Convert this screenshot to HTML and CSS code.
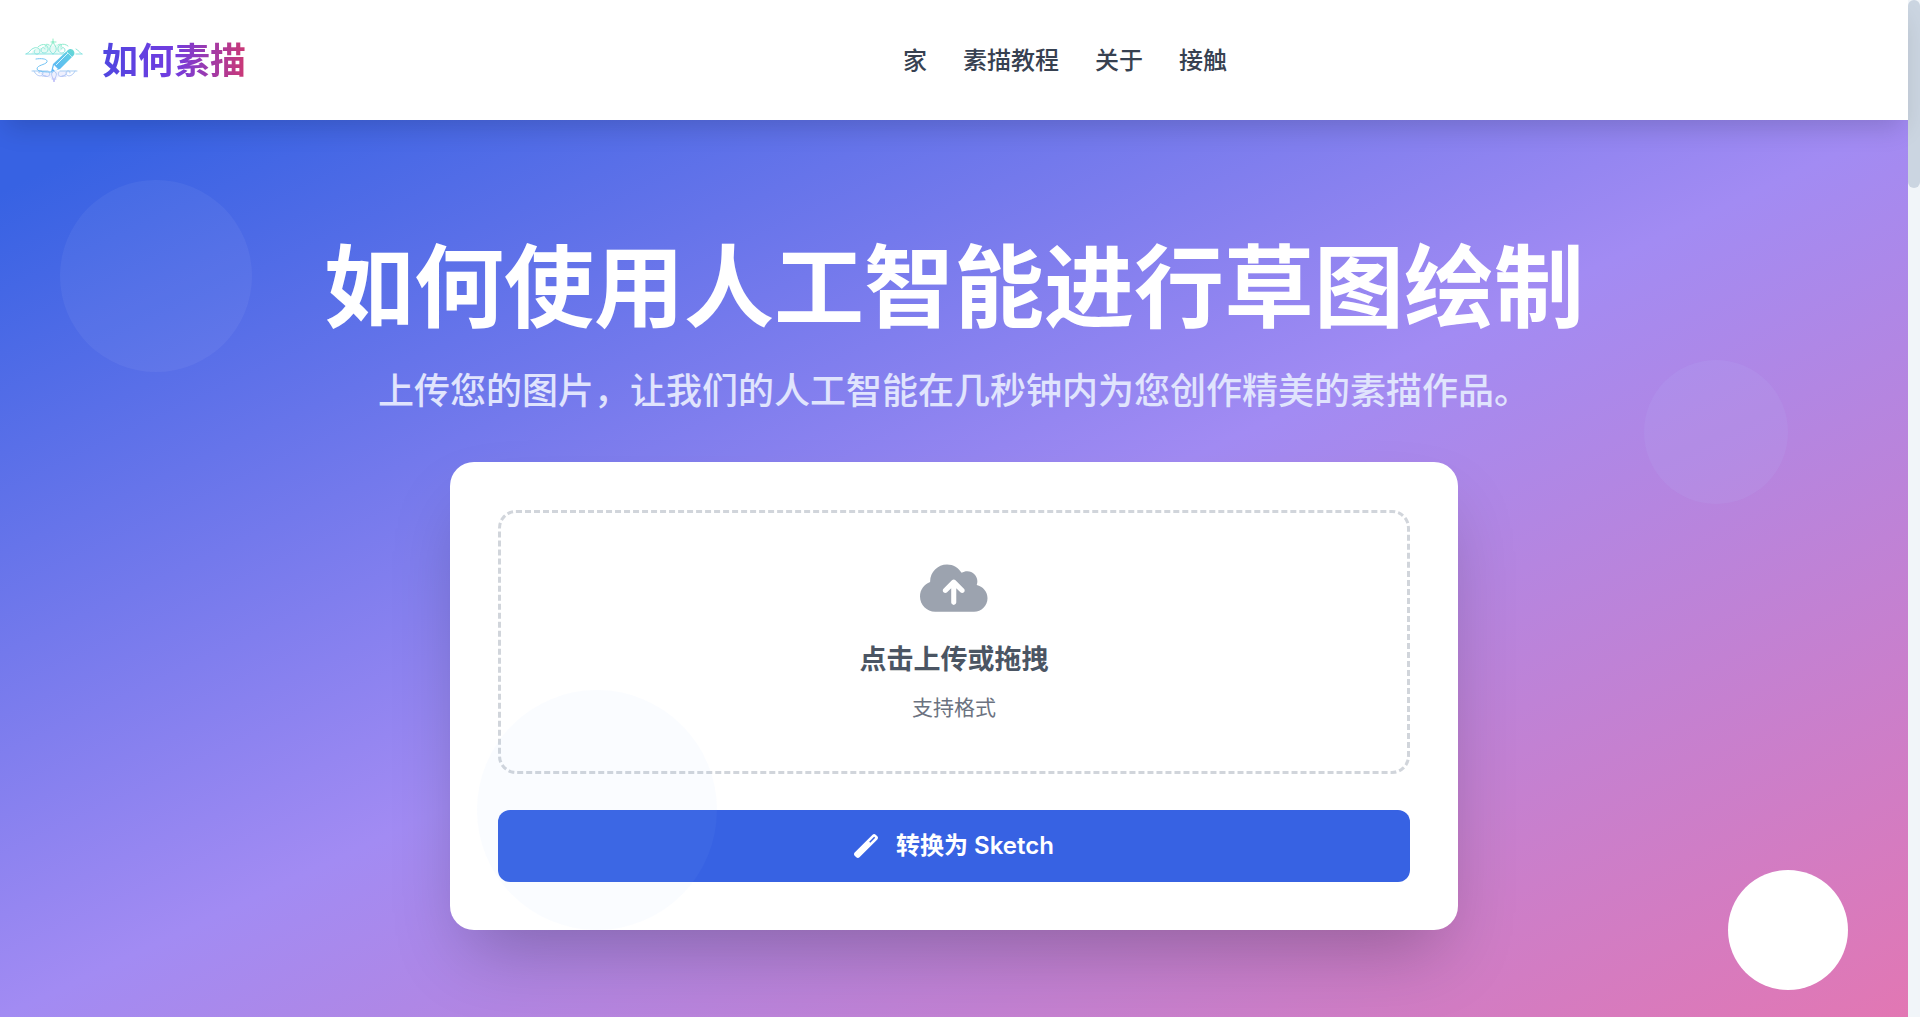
FILE: index.html
```
<!DOCTYPE html>
<html lang="zh-CN">

<head>
    <meta charset="UTF-8" />
    <meta name="viewport" content="width=device-width, initial-scale=1.0" />
    <title>如何素描</title>
    <link rel="stylesheet" href="styles.css">
</head>

<body>
    <div class="page">
        <header class="header">
            <a href="#" class="brand">
                <svg class="brand-logo" viewBox="0 0 60 46" fill="none" aria-hidden="true">
                    <defs>
                        <linearGradient id="ornament" x1="0" y1="0" x2="0" y2="46" gradientUnits="userSpaceOnUse">
                            <stop offset="0" stop-color="#8ff0c0" />
                            <stop offset="0.45" stop-color="#8ce0ec" />
                            <stop offset="1" stop-color="#c3b8fa" />
                        </linearGradient>
                        <linearGradient id="pencil" x1="50" y1="10" x2="28" y2="34" gradientUnits="userSpaceOnUse">
                            <stop offset="0" stop-color="#66dccb" />
                            <stop offset="0.3" stop-color="#5fcbe6" />
                            <stop offset="1" stop-color="#5fb4f8" />
                        </linearGradient>
                    </defs>
                    <!-- Upper scrollwork -->
                    <path d="M7 16c2-5 6-7 11-6c3-4 8-5 11-2c3-3 8-2 11 2l-7 6z" fill="#c9f5ec" opacity="0.5" />
                    <g stroke="url(#ornament)" stroke-linecap="round">
                        <path d="M2 16h40M52 16h6M2 16c4-1 4-5 8-6c5-2 8 4 4 6c-3 1-5-2-3-4M58 16c-3-1-3-4-6-5" />
                        <path d="M14 9c5-5 11-2 10 3c-1 4-7 4-7 0c0-3 4-3 4-1M44 8c-5-4-11-1-10 4c1 4 7 4 7 0c0-3-4-3-4-1" />
                        <path d="M29 16c-7-5-1-8 0-13c1 5 7 8 0 13M27 4h5M29 1v5M25 7c-3-2-4 0-3 2M34 7c3-2 4 0 3 2" />
                    </g>
                    <!-- Lower scrollwork -->
                    <path d="M12 33h35l-6 4-12 4-11-4z" fill="#dfe2fd" opacity="0.5" />
                    <g stroke="url(#ornament)" stroke-linecap="round">
                        <path d="M8 33h16M36 33h17M10 33c2 5 8 7 9 2c0-3-5-3-4 0M51 33c-2 5-8 7-9 2c0-3 5-3 4 0" />
                        <path d="M18 36c4 5 10 2 7-2M42 36c-4 5-10 2-7-2M30 33c-5 3-1 5 0 11c1-6 5-8 0-11M28 41h4M18 38h4M38 38h4" />
                    </g>
                    <path d="M12 21c6-1 12 0 11 3c-2 3-10 3-10 7c1 3 9 3 15 3" stroke="#72c3f4" stroke-linecap="round" />
                    <path d="M27 34l2-8L44 12c3-3 8 1 6 5L36 31z" fill="url(#pencil)" />
                    <path d="M32 27L44 15" stroke="#d8f2fc" />
                    <path d="M42 13l6 6" stroke="#b5ecee" />
                    <path d="M29 31l1-4 4 4-3 2z" fill="#fff" />
                </svg>
                <span class="brand-name">如何素描</span>
            </a>
            <nav class="nav">
                <a href="#">家</a>
                <a href="#">素描教程</a>
                <a href="#">关于</a>
                <a href="#">接触</a>
            </nav>
            <div class="header-end"></div>
        </header>

        <main class="hero">
            <h1>如何使用人工智能进行草图绘制</h1>
            <p class="subtitle">上传您的图片，让我们的人工智能在几秒钟内为您创作精美的素描作品。</p>

            <form class="card">
                <label class="upload" for="imageInput">
                    <svg class="upload-icon" viewBox="0 0 640 512" aria-hidden="true">
                        <path d="M144 480C64.500 480 0 415.500 0 336c0-62.800 40.200-116.200 96.200-135.900c-.1-2.700-.2-5.400-.2-8.100c0-88.400 71.600-160 160-160c59.300 0 111 32.200 138.700 80.200C409.900 102 428.300 96 448 96c53 0 96 43 96 96c0 12.200-2.300 23.800-6.400 34.600C596 238.400 640 290.100 640 352c0 70.700-57.300 128-128 128H144zm79-217c-9.400 9.400-9.400 24.600 0 33.900s24.600 9.400 33.900 0l39-39V392c0 13.300 10.700 24 24 24s24-10.700 24-24V257.900l39 39c9.400 9.400 24.600 9.400 33.900 0s9.400-24.600 0-33.900l-80-80c-9.400-9.400-24.600-9.400-33.900 0l-80 80z" />
                    </svg>
                    <span class="upload-title">点击上传或拖拽</span>
                    <span class="upload-hint">支持格式</span>
                    <input type="file" id="imageInput" class="upload-input" accept="image/*" />
                </label>
                <button type="button" class="convert">
                    <svg class="convert-icon" viewBox="0 0 512 512" aria-hidden="true">
                        <path d="M14.100 463.300c-18.700-18.700-18.700-49.100 0-67.900L395.400 14.100c18.700-18.700 49.100-18.700 67.900 0l34.600 34.600c18.700 18.700 18.700 49.100 0 67.900L116.500 497.900c-18.700 18.700-49.100 18.700-67.900 0L14.100 463.300zM347.600 187.600l105-105L429.400 59.300l-105 105 23.300 23.300z" />
                    </svg>
                    转换为 Sketch
                </button>
            </form>

            <!-- Floating shapes -->
            <div class="shape shape-1"></div>
            <div class="shape shape-2"></div>
            <div class="shape shape-3"></div>
            <div class="shape shape-4"></div>
        </main>
    </div>

    <div class="scrollbar">
        <div class="scrollbar-thumb"></div>
    </div>
</body>

</html>
```
FILE: styles.css
```
* {
    margin: 0;
    padding: 0;
    box-sizing: border-box;
}

body {
    display: flex;
    min-height: 100vh;
    font-family: Inter, "Noto Sans CJK SC", sans-serif;
    color: #374151;
    background-color: #fff;
}

a {
    color: inherit;
    text-decoration: none;
}

.page {
    flex: 1;
    display: flex;
    flex-direction: column;
}

/* Header */
.header {
    position: relative;
    z-index: 10;
    display: flex;
    justify-content: space-between;
    align-items: center;
    height: 120px;
    padding: 2px 24px 0;
    background-color: #fff;
    box-shadow: 0 14px 24px -6px rgba(0, 0, 0, 0.15);
}

.brand {
    display: flex;
    align-items: center;
    gap: 18px;
}

.brand-logo {
    width: 60px;
    height: 46px;
}

.brand-name {
    font-size: 36px;
    font-weight: 700;
    line-height: 48px;
    background: linear-gradient(to right, #4f46e0, #723ce0 50%, #cc3874);
    -webkit-background-clip: text;
    background-clip: text;
    color: transparent;
}

.nav {
    display: flex;
    gap: 36px;
    font-size: 24px;
    font-weight: 500;
    line-height: 36px;
}

/* Hero */
.hero {
    position: relative;
    flex: 1;
    display: flex;
    flex-direction: column;
    align-items: center;
    padding: 112px 24px 87px;
    overflow: hidden;
    text-align: center;
    background: linear-gradient(to bottom right, #3762e3 4%, #a28bf3 50%, #e277b3);
}

h1 {
    margin-bottom: 20px;
    font-size: 90px;
    font-weight: 700;
    line-height: 112px;
    color: #fff;
}

.subtitle {
    margin-bottom: 44px;
    font-size: 36px;
    font-weight: 500;
    line-height: 54px;
    color: #e0e4fd;
}

.card {
    width: 100%;
    max-width: 1008px;
    padding: 48px;
    border-radius: 24px;
    background-color: #fff;
    box-shadow: 0 36px 72px -18px rgba(0, 0, 0, 0.25);
}

.upload {
    display: flex;
    flex-direction: column;
    align-items: center;
    margin-bottom: 36px;
    padding: 48px;
    border: 3px dashed #d1d5db;
    border-radius: 18px;
    cursor: pointer;
}

.upload-icon {
    height: 54px;
    margin-bottom: 24px;
    fill: #9ca3af;
}

.upload-title {
    margin-bottom: 12px;
    font-size: 27px;
    font-weight: 600;
    line-height: 42px;
    color: #4b5563;
}

.upload-hint {
    font-size: 21px;
    line-height: 30px;
    color: #6b7280;
}

.upload-input {
    display: none;
}

.convert {
    display: flex;
    justify-content: center;
    align-items: center;
    gap: 18px;
    width: 100%;
    padding: 18px;
    border: none;
    border-radius: 12px;
    font-family: inherit;
    font-size: 24px;
    font-weight: 600;
    line-height: 36px;
    color: #fff;
    background-color: #3762e3;
    cursor: pointer;
}

.convert:hover {
    background-color: #2f55cc;
}

.convert-icon {
    width: 24px;
    height: 24px;
    fill: #fff;
}

/* Floating shapes */
.shape {
    position: absolute;
    border-radius: 50%;
    pointer-events: none;
}

.shape-1 {
    top: 60px;
    left: 60px;
    width: 192px;
    height: 192px;
    background-color: rgba(255, 255, 255, 0.05);
}

.shape-2 {
    top: 240px;
    right: 120px;
    width: 144px;
    height: 144px;
    background-color: rgba(190, 200, 255, 0.1);
}

.shape-3 {
    bottom: 87px;
    left: 25%;
    width: 240px;
    height: 240px;
    background-color: rgba(160, 200, 255, 0.05);
}

.shape-4 {
    right: 60px;
    bottom: 27px;
    width: 120px;
    height: 120px;
    background-color: #fff;
}

/* Scrollbar */
.scrollbar {
    width: 12px;
    background-color: #f1f5f9;
}

.scrollbar-thumb {
    height: 188px;
    border-radius: 6px;
    background-color: #cbd5e1;
}
```
